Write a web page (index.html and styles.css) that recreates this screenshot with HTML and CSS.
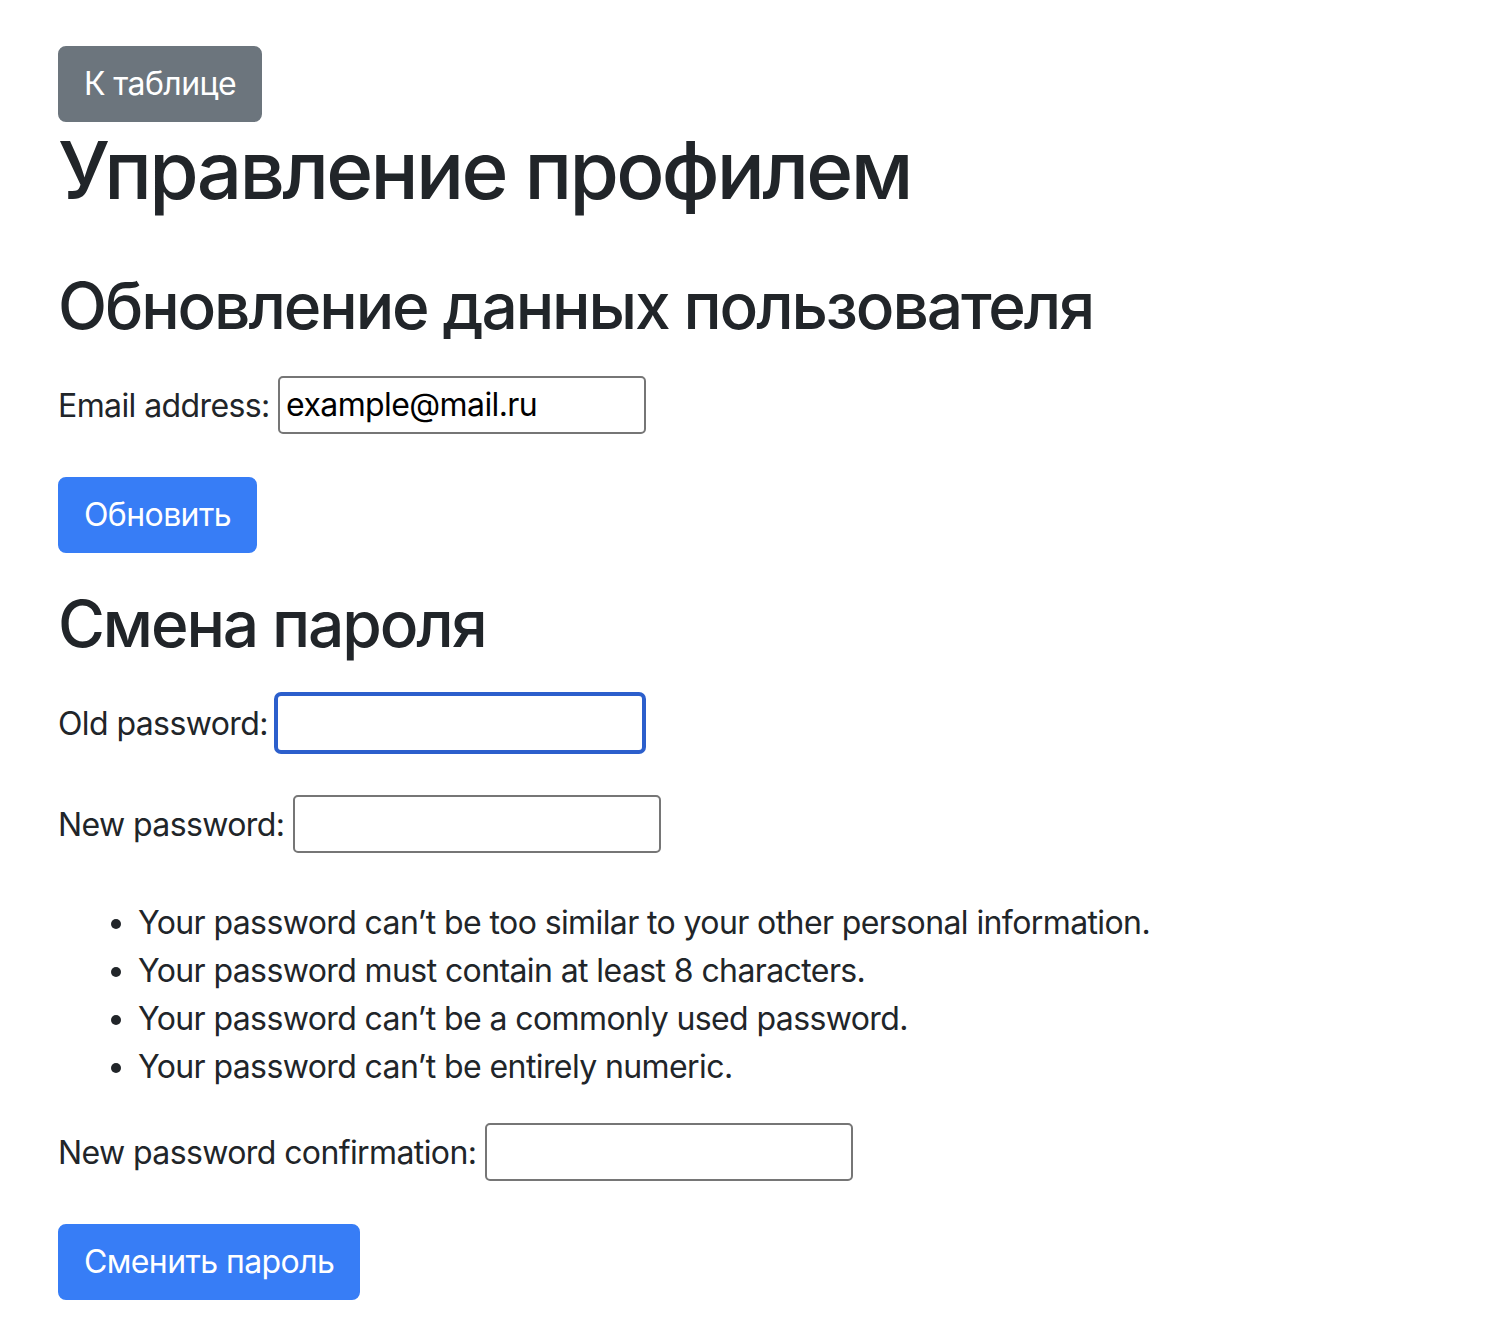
FILE: index.html
```html
<!DOCTYPE html>
<html lang="ru">
<head>
<meta charset="utf-8">
<title>Управление профилем</title>
<link rel="stylesheet" href="styles.css">
</head>
<body>
<div class="container">
  <a class="btn btn-secondary" href="#">К таблице</a>
  <h1 class="title">Управление профилем</h1>

  <h2 class="section">Обновление данных пользователя</h2>
  <form class="form">
    <p class="field"><label>Email address:</label> <input class="input" type="text" value="example@mail.ru"></p>
    <button class="btn btn-primary" type="button">Обновить</button>
  </form>

  <h2 class="section section-second">Смена пароля</h2>
  <form class="form">
    <p class="field"><label>Old password:</label> <input class="input input-focus" type="password"></p>
    <p class="field"><label>New password:</label> <input class="input" type="password"></p>
    <ul class="help">
      <li>Your password can’t be too similar to your other personal information.</li>
      <li>Your password must contain at least 8 characters.</li>
      <li>Your password can’t be a commonly used password.</li>
      <li>Your password can’t be entirely numeric.</li>
    </ul>
    <p class="field"><label>New password confirmation:</label> <input class="input" type="password"></p>
    <button class="btn btn-primary" type="button">Сменить пароль</button>
  </form>
</div>
</body>
</html>
```
FILE: styles.css
```css
html, body {
  margin: 0;
  padding: 0;
  background: #fff;
}
body {
  font-family: Inter, "Noto Sans", "Liberation Sans", sans-serif;
  font-size: 32px;
  line-height: 1.5;
  letter-spacing: -0.6px;
  color: #212529;
}
.container {
  padding: 46px 58px 30px;
}
.btn {
  display: inline-block;
  font-family: inherit;
  font-size: 32px;
  line-height: 48px;
  letter-spacing: -0.6px;
  padding: 12px 24px;
  border: 2px solid transparent;
  border-radius: 8px;
  color: #fff;
  text-decoration: none;
  cursor: pointer;
  vertical-align: top;
}
.btn-secondary {
  background: #6c757d;
  border-color: #6c757d;
}
.btn-primary {
  background: #377df6;
  border-color: #377df6;
}
.title {
  font-size: 80px;
  font-weight: 500;
  line-height: 1.2;
  letter-spacing: -2.7px;
  margin: 0 0 16px;
}
.section {
  font-size: 64px;
  font-weight: 500;
  line-height: 1.2;
  letter-spacing: -2.1px;
  margin: 50px 0 31px;
}
.section-second {
  margin-top: 33px;
}
.form {
  margin: 0;
}
.field {
  margin: 0 0 43px;
}
.input {
  font-family: inherit;
  font-size: 32px;
  line-height: 48px;
  letter-spacing: -0.6px;
  height: 58px;
  width: 368px;
  box-sizing: border-box;
  padding: 2px 6px;
  border: 2px solid #767676;
  border-radius: 5px;
  color: #000;
  background: #fff;
  vertical-align: baseline;
}
.input-focus {
  border-color: #2c5fcc;
  outline: none;
  box-shadow: 0 0 0 2px #2c5fcc;
}
.help {
  margin: 46px 0 32px;
  padding-left: 80px;
}
```
